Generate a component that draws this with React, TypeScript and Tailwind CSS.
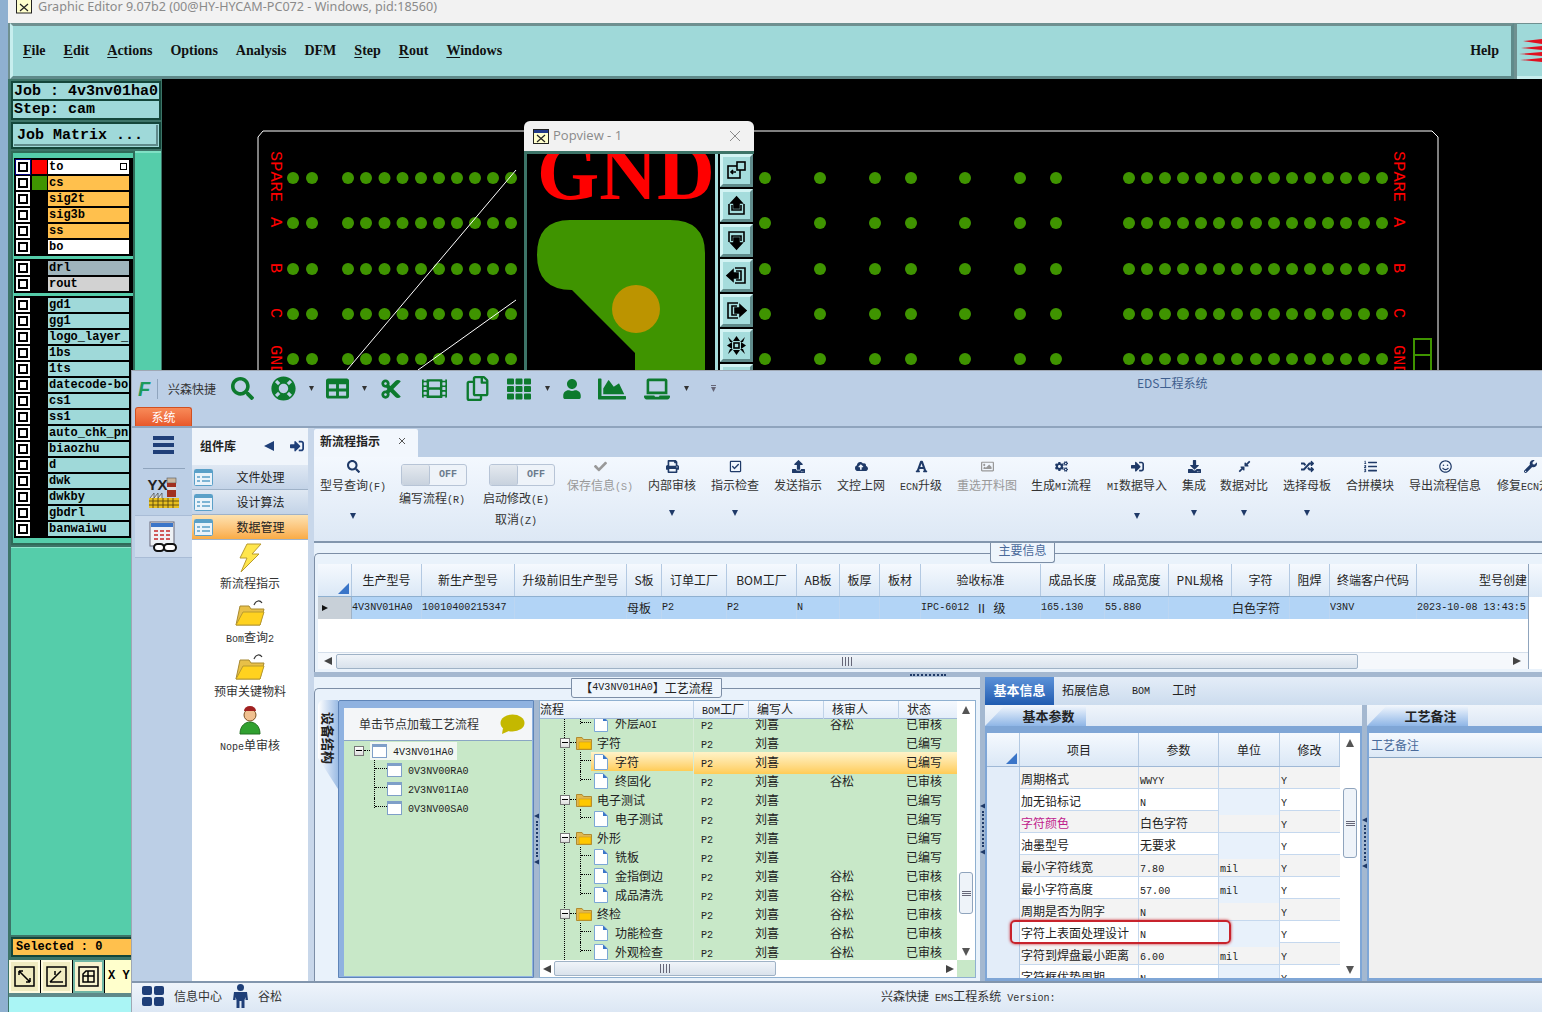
import React from "react";
import {
  FaSearch, FaLifeRing, FaTable, FaCut, FaFilm, FaRegCopy, FaTh, FaUser, FaChartArea, FaLaptop,
  FaCheck, FaPrint, FaRegCheckSquare, FaUpload, FaCloudUploadAlt, FaFont, FaRegImage, FaCogs,
  FaSignInAlt, FaDownload, FaCompressAlt, FaRandom, FaListOl, FaRegSmile, FaWrench,
} from "react-icons/fa";

function T({ s }: { s: string }) {
  return (
    <>
      {s.split(/([\x00-\x7F]+)/).filter(Boolean).map((p, i) =>
        /^[\x00-\x7F]+$/.test(p) ? (
          <span key={i} className="font-['Liberation_Mono',monospace] text-[0.84em]">{p}</span>
        ) : (
          <span key={i}>{p}</span>
        )
      )}
    </>
  );
}

function Tri({ dir = "down", c = "#333", s = 4 }: { dir?: "down" | "up" | "left" | "right"; c?: string; s?: number }) {
  const pts = { down: "0,0 8,0 4,8", up: "0,8 8,8 4,0", left: "8,0 8,8 0,4", right: "0,0 0,8 8,4" }[dir];
  return (
    <svg width={s * 2} height={s * 2} viewBox="0 0 8 8" className="shrink-0">
      <polygon points={pts} fill={c} />
    </svg>
  );
}

function Grip() {
  return (
    <span className="flex gap-[2px]">
      <span className="h-[9px] w-[1px] bg-[#667]" />
      <span className="h-[9px] w-[1px] bg-[#667]" />
      <span className="h-[9px] w-[1px] bg-[#667]" />
      <span className="h-[9px] w-[1px] bg-[#667]" />
    </span>
  );
}

function GripH() {
  return (
    <span className="flex flex-col gap-[1px]">
      <span className="h-[1px] w-[9px] bg-[#667]" />
      <span className="h-[1px] w-[9px] bg-[#667]" />
      <span className="h-[1px] w-[9px] bg-[#667]" />
    </span>
  );
}

const layerGroups: { n: string; bg: string; swatch?: string; active?: boolean; sq?: boolean }[][] = [
  [
    { n: "to", bg: "bg-white", swatch: "bg-[#ff0000]", active: true, sq: true },
    { n: "cs", bg: "bg-[#ffc04d]", swatch: "bg-[#3f9400]" },
    { n: "sig2t", bg: "bg-[#ffc04d]" },
    { n: "sig3b", bg: "bg-[#ffc04d]" },
    { n: "ss", bg: "bg-[#ffc04d]" },
    { n: "bo", bg: "bg-white" },
  ],
  [
    { n: "drl", bg: "bg-[#9fb4bc]" },
    { n: "rout", bg: "bg-[#d2d2d2]" },
  ],
  ["gd1", "gg1", "logo_layer_l", "1bs", "1ts", "datecode-bo", "cs1", "ss1", "auto_chk_pnl", "biaozhu", "d", "dwk", "dwkby", "gbdrl", "banwaiwu"].map((n) => ({
    n,
    bg: "bg-[#9fd9d9]",
  })),
];

function LayerRow({ l }: { l: (typeof layerGroups)[number][number] }) {
  return (
    <div className="flex h-[16px] items-center bg-black pl-[1px]">
      <div className={`flex h-[16px] w-[16px] items-center justify-center ${l.active ? "bg-[#000080]" : ""}`}>
        <div className="h-[14px] w-[14px] bg-white p-[2px]">
          <div className="h-full w-full bg-black p-[2px]">
            <div className="h-full w-full bg-white" />
          </div>
        </div>
      </div>
      <div className={`ml-[1px] h-[14px] w-[15px] ${l.swatch ?? ""}`} />
      <div className={`relative ml-[1px] h-[14px] w-[81px] overflow-hidden whitespace-nowrap pl-[1px] font-['Liberation_Mono',monospace] text-[12px] font-bold leading-[14px] text-black ${l.bg}`}>
        {l.n}
        {l.sq && <span className="absolute right-[2px] top-[3px] h-[7px] w-[7px] border border-black" />}
      </div>
    </div>
  );
}

function LeftPanel() {
  return (
    <div className="flex w-[154px] shrink-0 flex-col bg-[#3d7468] pl-[3px] pr-[1px] pt-[2px]">
      <div className="h-[20px] border-2 border-[#14463a] bg-[#9fd9d9] pl-[1px] pt-[1px] font-['Liberation_Mono',monospace] text-[15px] font-bold leading-[15px] whitespace-pre">Job : 4v3nv01ha0</div>
      <div className="h-[19px] border-2 border-t-0 border-[#14463a] bg-[#9fd9d9] pl-[1px] pt-[1px] font-['Liberation_Mono',monospace] text-[15px] font-bold leading-[15px] whitespace-pre">Step: cam</div>
      <div className="mt-[2px] h-[27px] border-2 border-[#14463a] bg-[#9fd9d9] p-[1px]">
        <div className="h-full border-b-2 border-r-2 border-b-[#5f8a8a] border-r-[#5f8a8a] pl-[3px] pt-[2px] font-['Liberation_Mono',monospace] text-[15px] font-bold leading-[17px] whitespace-pre">Job Matrix ...</div>
      </div>
      <div className="mt-[2px] flex h-[394px] shrink-0">
        <div className="flex w-[124px] flex-col gap-[3px] border-2 border-[#2f6a58] bg-[#55cdaa] pb-[2px] pl-[1px] pt-[5px]">
          {layerGroups.map((g, i) => (
            <div key={i} className="bg-black py-[1px]">
              {g.map((l) => <LayerRow key={l.n} l={l} />)}
            </div>
          ))}
        </div>
        <div className="flex-1 border-t-2 border-t-[#7fe0c4] bg-[#55cdaa]" />
      </div>
      <div className="mt-[2px] flex-1 border-t border-t-[#8fe6cc] bg-[#55cdaa]" />
      <div className="mt-[2px] h-[20px] border-2 border-[#14463a] bg-[#ffc04d] pl-[3px] font-['Liberation_Mono',monospace] text-[12px] font-bold leading-[16px] whitespace-pre">Selected : 0</div>
      <div className="mt-[3px] -ml-[2px] flex h-[33px] gap-[1px] bg-black">
        {[0, 1, 2].map((i) => (
          <div key={i} className={`flex h-[33px] w-[31px] items-center justify-center border-2 ${i === 2 ? "border-[#6fb5a5] bg-[#f8f3d0]" : "border-[#fffbe0] bg-[#f0ebc0]"}`}>
            <svg width="21" height="21" viewBox="0 0 21 21" fill="none" stroke="black">
              <rect x="1" y="1" width="19" height="19" strokeWidth="1.5" />
              {i === 0 && <path d="M5 5l11 11M5 5v4M5 5h4M16 16v-4M16 16h-4" strokeWidth="1.5" />}
              {i === 1 && <path d="M4 16l11-11M4 16h13M9 5v4" strokeWidth="1.5" />}
              {i === 2 && <path d="M5 16V8l3-3h8v11zM5 10h11M10 5v11" strokeWidth="1.5" />}
            </svg>
          </div>
        ))}
        <div className="flex-1 bg-[#ffffcc] pl-[3px] font-['Liberation_Mono',monospace] text-[12px] font-bold leading-[33px] whitespace-pre">X Y</div>
      </div>
      <div className="-ml-[2px] h-[4px] bg-[#5f8a8a]" />
      <div className="-ml-[2px] h-[15px] bg-[#aaf5f5]" />
    </div>
  );
}

const leftDots = [293, 312, 348, 366, 384.5, 402.5, 421, 439, 457, 475, 493, 511];
const rightDots = [765, 820, 875, 911, 965, 1020, 1056, 1129, 1147, 1165, 1183, 1201, 1219, 1237, 1256, 1274, 1292, 1310, 1328, 1346, 1364, 1382];
const rows = [178, 223, 269, 314, 359];

function RedLabels({ x }: { x: number }) {
  const items: [string, number][] = [["SPARE", 151], ["A", 217], ["B", 263], ["C", 308], ["GND", 345]];
  return (
    <>
      {items.map(([t, y]) => (
        <text key={t} transform={`translate(${x},${y}) rotate(90)`} fontSize="17" fontFamily="'Liberation Mono',monospace" fontWeight="400" fill="#ff0000">
          {t}
        </text>
      ))}
    </>
  );
}

function Canvas() {
  return (
    <div className="relative flex-1 bg-black">
      <svg className="absolute inset-0" width="1380" height="933" viewBox="162 79 1380 933">
        <path d="M258 400V137L263 131H1432L1438 137V400" fill="none" stroke="white" strokeWidth="1" />
        {rows.map((y) => [...leftDots, ...rightDots].map((x) => <circle key={`${x}-${y}`} cx={x} cy={y} r="6" fill="#3f9400" />))}
        <RedLabels x={271} />
        <RedLabels x={1394} />
        <path d="M516 170L347 370M516 300L418 370" stroke="white" strokeWidth="1" />
        <path d="M1414 339H1431V372H1414ZM1414 355H1431" fill="none" stroke="#3f9400" strokeWidth="2" />
      </svg>
    </div>
  );
}

function PopBtn({ children }: { children: React.ReactNode }) {
  return (
    <div className="flex h-[33px] w-[33px] shrink-0 items-center justify-center border-[3px] border-b-[#5f8a8a] border-l-[#d2f3f3] border-r-[#5f8a8a] border-t-[#d2f3f3] bg-[#a5dcdc]">
      <svg width="21" height="21" viewBox="0 0 21 21" fill="none" stroke="black" strokeWidth="1.6">{children}</svg>
    </div>
  );
}

function Popview() {
  return (
    <div className="absolute left-[524px] top-[121px] flex h-[249px] w-[230px] flex-col overflow-hidden rounded-t-[6px] bg-black">
      <div className="flex h-[30px] shrink-0 items-center bg-[#f2f2f2] pl-[9px] pr-[13px]">
        <svg width="16" height="15" viewBox="0 0 16 15">
          <rect x=".5" y=".5" width="15" height="14" fill="#ffffcc" stroke="#222" />
          <rect x="1" y="1" width="14" height="3" fill="#223a8a" />
          <path d="M4 6l8 7M12 6l-8 7" stroke="#222" strokeWidth="1.2" />
        </svg>
        <span className="ml-[4px] font-['Open_Sans',sans-serif] text-[13px] text-[#8a8a8a]">Popview - 1</span>
        <svg className="ml-auto" width="12" height="12" viewBox="0 0 12 12" stroke="#8a8a8a" strokeWidth="1"><path d="M1 1l10 10M11 1L1 11" /></svg>
      </div>
      <div className="flex min-h-0 flex-1 border-l-[3px] border-t-[3px] border-l-[#3d7468] border-t-[#3d7468]">
        <svg width="188" height="216" viewBox="527 154 188 216" className="shrink-0">
          <text x="537" y="199" fontSize="80" fontWeight="700" fontFamily="'Liberation Serif',serif" fill="#ff0000">GND</text>
          <path d="M570 220H670Q705 220 705 253V372H635V353L572 290Q537 290 537 255Q537 220 570 220Z" fill="#3f9400" />
          <circle cx="636" cy="309" r="24" fill="#bc9400" />
        </svg>
        <div className="flex flex-col gap-[2px] border-l-[3px] border-l-[#a5dcdc] bg-black pl-[2px]">
          <PopBtn><rect x="2" y="6" width="12" height="12" /><rect x="11" y="2" width="8" height="8" fill="#a5dcdc" /><path d="M10 12H5M7 10l-2 2 2 2" /></PopBtn>
          <PopBtn><path d="M3 9v10h15V9" /><path d="M6 10V15H15V10" /><path d="M10.5 2L5 8h3v5h5V8h3z" fill="black" /></PopBtn>
          <PopBtn><path d="M3 12V2h15v10" /><path d="M6 11V6H15V11" /><path d="M10.5 19L5 13h3V8h5v5h3z" fill="black" /></PopBtn>
          <PopBtn><path d="M9 3h10v15H9" /><path d="M10 6h5v9h-5" /><path d="M1 10.5L7 5v3h5v5H7v3z" fill="black" /></PopBtn>
          <PopBtn><path d="M12 3H2v15h10" /><path d="M11 6H6v9h5" /><path d="M20 10.5L14 5v3H9v5h5v3z" fill="black" /></PopBtn>
          <PopBtn><rect x="8" y="8" width="5" height="5" /><path d="M2 2l5 5H4zM19 2l-5 5h3zM2 19l5-5H4zM19 19l-5-5h3zM1 10.5L6 7v7zM20 10.5L15 7v7zM10.5 1L7 6h7zM10.5 20L7 15h7z" fill="black" stroke="none" /></PopBtn>
          <PopBtn><rect x="3" y="3" width="15" height="15" /></PopBtn>
        </div>
      </div>
    </div>
  );
}

const toolIcons: { w: string; i?: React.ReactNode }[] = [
  { w: "w-[36px]", i: <FaSearch size={23} /> },
  { w: "w-[46px]", i: <FaLifeRing size={25} /> },
  { w: "w-[10px]" },
  { w: "w-[42px]", i: <FaTable size={23} /> },
  { w: "w-[12px]" },
  { w: "w-[42px]", i: <FaCut size={22} /> },
  { w: "w-[44px]", i: <FaFilm size={25} /> },
  { w: "w-[42px]", i: <FaRegCopy size={25} /> },
  { w: "w-[42px]", i: <FaTh size={24} /> },
  { w: "w-[14px]" },
  { w: "w-[36px]", i: <FaUser size={20} /> },
  { w: "w-[44px]", i: <FaChartArea size={28} /> },
  { w: "w-[46px]", i: <FaLaptop size={26} /> },
  { w: "w-[12px]" },
];

type Rb = { l: string; w: string; I?: React.ComponentType<{ size?: number; className?: string }>; c?: boolean; off?: boolean; t?: string[]; tm?: string };
const ribbon: Rb[] = [
  { l: "型号查询(F)", w: "w-[78px]", I: FaSearch, c: true },
  { l: "编写流程(R)", w: "w-[80px]", t: ["编写流程(R)"], tm: "ml-[4px]" },
  { l: "启动修改(E)", w: "w-[88px]", t: ["启动修改(E)", "取消(Z)"], tm: "ml-[12px]" },
  { l: "保存信息(S)", w: "w-[80px]", I: FaCheck, off: true },
  { l: "内部审核", w: "w-[64px]", I: FaPrint, c: true },
  { l: "指示检查", w: "w-[62px]", I: FaRegCheckSquare, c: true },
  { l: "发送指示", w: "w-[64px]", I: FaUpload },
  { l: "文控上网", w: "w-[62px]", I: FaCloudUploadAlt },
  { l: "ECN升级", w: "w-[58px]", I: FaFont },
  { l: "重选开料图", w: "w-[74px]", I: FaRegImage, off: true },
  { l: "生成MI流程", w: "w-[74px]", I: FaCogs },
  { l: "MI数据导入", w: "w-[78px]", I: FaSignInAlt, c: true },
  { l: "集成", w: "w-[36px]", I: FaDownload, c: true },
  { l: "数据对比", w: "w-[64px]", I: FaCompressAlt, c: true },
  { l: "选择母板", w: "w-[62px]", I: FaRandom, c: true },
  { l: "合拼模块", w: "w-[64px]", I: FaListOl },
  { l: "导出流程信息", w: "w-[86px]", I: FaRegSmile },
  { l: "修复ECN升级", w: "w-[84px]", I: FaWrench },
];

function RibbonBtn({ b }: { b: Rb }) {
  if (b.t) {
    return (
      <div className={`flex shrink-0 flex-col items-center ${b.w}`}>
        <div className={`mt-[7px] flex h-[22px] w-[66px] rounded-[3px] border border-[#b7c4d6] bg-[#eef3f9] ${b.tm}`}>
          <div className="w-[28px] rounded-[2px] border-r border-[#b7c4d6] bg-gradient-to-b from-[#e4e9ef] to-[#c8d2de]" />
          <div className="flex-1 text-center font-['Liberation_Mono',monospace] text-[10px] font-bold leading-[20px] text-[#6b7b8d]">OFF</div>
        </div>
        <div className="mt-[3px] text-center text-[12px] leading-[18px] text-[#333]">
          {b.t.map((x) => <div key={x}><T s={x} /></div>)}
        </div>
      </div>
    );
  }
  const I = b.I!;
  return (
    <div className={`flex shrink-0 flex-col items-center ${b.w} ${b.off ? "text-[#999]" : "text-[#333]"}`}>
      <div className={`mt-[2px] flex h-[14px] items-center ${b.off ? "" : "text-[#1f3a68]"}`}><I size={13} /></div>
      <div className="mt-[4px] whitespace-nowrap text-[12px] leading-[16px]"><T s={b.l} /></div>
      {b.c && <div className="mt-[18px] flex h-[4px] items-center"><Tri c="#1f3a68" s={3} /></div>}
    </div>
  );
}

const mainCols = "grid-cols-[34px_70px_93px_112px_35px_65px_70px_43px_40px_41px_120px_64px_64px_63px_58px_40px_87px_110px]";
const mainHead: [string, boolean?][] = [["生产型号"], ["新生产型号"], ["升级前旧生产型号"], ["S板", true], ["订单工厂"], ["BOM工厂", true], ["AB板", true], ["板厚"], ["板材"], ["验收标准"], ["成品长度"], ["成品宽度"], ["PNL规格", true], ["字符"], ["阻焊"], ["终端客户代码"]];
const mainRow = ["4V3NV01HA0", "10010400215347", "", "母板", "P2", "P2", "N", "", "", "IPC-6012 Ⅱ 级", "165.130", "55.880", "", "白色字符", "", "V3NV", "2023-10-08 13:43:5"];

function MainTable() {
  return (
    <div className="flex min-h-0 flex-1 bg-white">
      <div className="flex w-[1210px] shrink-0 flex-col overflow-hidden">
        <div className={`grid h-[33px] shrink-0 ${mainCols} border-b border-[#8fb0d0] bg-gradient-to-b from-[#f5f9fe] to-[#dbe8f6]`}>
          <div className="relative border-r border-[#b3c9e2]"><span className="absolute bottom-[2px] right-[2px] border-b-[11px] border-l-[11px] border-b-[#3a75c8] border-l-transparent" /></div>
          {mainHead.map(([h, sans]) => (
            <div key={h} className="flex items-center justify-center overflow-hidden whitespace-nowrap border-r border-[#b3c9e2] text-[12px] text-[#222]">{sans ? h : <T s={h} />}</div>
          ))}
          <div className="flex items-center justify-end overflow-hidden text-[12px] text-[#222]">型号创建</div>
        </div>
        <div className={`grid h-[22px] shrink-0 ${mainCols} bg-[#b2d4f6]`}>
          <div className="flex items-center border-r border-[#9fb2c6] bg-[#c8d0d8] pl-[4px]"><Tri dir="right" c="#111" s={3} /></div>
          {mainRow.map((c, i) => (
            <div key={i} className="flex items-center overflow-hidden whitespace-pre border-r border-[#bcd6f2] text-[12px] leading-[22px] text-[#222]"><T s={c} /></div>
          ))}
        </div>
        <div className="flex-1 bg-white" />
        <div className="flex h-[17px] shrink-0 items-center border-t border-[#d5dfeb] bg-[#f5f8fc] pl-[6px]">
          <Tri dir="left" c="#444" s={4} />
          <div className="ml-[4px] flex h-[15px] w-[1022px] items-center justify-center rounded-[2px] border border-[#9fb2c6] bg-gradient-to-b from-[#f0f4f9] to-[#d9e2ec]">
            <Grip />
          </div>
          <span className="ml-[155px]"><Tri dir="right" c="#444" s={4} /></span>
        </div>
      </div>
      <div className="flex-1 border-l border-[#8fa4bd] bg-white">
        <div className="h-[33px] bg-gradient-to-b from-[#f5f9fe] to-[#dbe8f6]" />
      </div>
    </div>
  );
}

type Fl = { n: string; k: "leaf" | "folder"; last?: boolean; sel?: boolean; rv?: string; st: string };
const flow: Fl[] = [
  { n: "外层AOI", k: "leaf", last: true, rv: "谷松", st: "已审核" },
  { n: "字符", k: "folder", st: "已编写" },
  { n: "字符", k: "leaf", sel: true, st: "已编写" },
  { n: "终固化", k: "leaf", last: true, rv: "谷松", st: "已审核" },
  { n: "电子测试", k: "folder", st: "已编写" },
  { n: "电子测试", k: "leaf", last: true, st: "已编写" },
  { n: "外形", k: "folder", st: "已编写" },
  { n: "铣板", k: "leaf", st: "已编写" },
  { n: "金指倒边", k: "leaf", rv: "谷松", st: "已审核" },
  { n: "成品清洗", k: "leaf", last: true, rv: "谷松", st: "已审核" },
  { n: "终检", k: "folder", rv: "谷松", st: "已审核" },
  { n: "功能检查", k: "leaf", rv: "谷松", st: "已审核" },
  { n: "外观检查", k: "leaf", last: true, rv: "谷松", st: "已审核" },
];

function Doc() {
  return (
    <svg width="14" height="16" viewBox="0 0 14 16" className="shrink-0">
      <path d="M.5.5H9L13.5 5V15.5H.5Z" fill="#fff" stroke="#7ba7d6" />
      <path d="M9 .5V5H13.5Z" fill="#3a75c8" />
    </svg>
  );
}
function Folder() {
  return (
    <svg width="16" height="14" viewBox="0 0 16 14" className="shrink-0">
      <path d="M.5 13.5V1.5H6L7.5 3.5H15.5V13.5Z" fill="#e0b850" stroke="#b08a30" />
      <rect x="3" y="6" width="12" height="7" fill="#ffc800" stroke="#c89a20" strokeWidth=".6" />
    </svg>
  );
}
function Exp() {
  return (
    <span className="flex h-[10px] w-[10px] shrink-0 items-center justify-center border border-[#777] bg-gradient-to-b from-white to-[#ddd]">
      <span className="h-[1px] w-[6px] bg-black" />
    </span>
  );
}
function Win({ w = 15 }: { w?: number }) {
  return (
    <svg width={w} height="14" viewBox="0 0 15 14" className="shrink-0">
      <rect x=".5" y=".5" width="14" height="13" fill="#fff" stroke="#7f9fc8" />
      <rect x="1" y="1" width="13" height="2" fill="#7f9fc8" />
    </svg>
  );
}

function VSplit() {
  return (
    <div className="flex w-[5px] shrink-0 flex-col items-center justify-center gap-[2px] bg-[#a4b8d0]">
      <Tri dir="left" c="#1f3a68" s={3} />
      <div className="h-[36px] w-[2px] border-l-2 border-dotted border-[#1f3a68]" />
      <Tri dir="left" c="#1f3a68" s={3} />
    </div>
  );
}

function FlowGrid() {
  const cols = "grid-cols-[154px_55px_75px_75px_59px]";
  return (
    <div className="relative flex w-[437px] shrink-0 flex-col border border-[#8fb0d0] bg-white">
      <div className="flex min-h-0 flex-1">
        <div className="flex min-w-0 flex-1 flex-col">
          <div className={`grid h-[18px] shrink-0 ${cols} border-b border-[#9fb8d6] bg-gradient-to-b from-[#f5f9fe] to-[#e3edf9] text-[12px] leading-[15px] text-[#222]`}>
            <div className="border-r border-[#c0d3e8]">流程</div>
            <div className="border-r border-[#c0d3e8] pl-[8px]"><T s="BOM工厂" /></div>
            <div className="border-r border-[#c0d3e8] pl-[8px]">编写人</div>
            <div className="border-r border-[#c0d3e8] pl-[8px]">核审人</div>
            <div className="pl-[8px]">状态</div>
          </div>
          <div className="relative min-h-0 flex-1 overflow-hidden bg-[#c8e8c8]">
            <div className="absolute bottom-0 left-[24px] top-0 border-l border-dotted border-black" />
            <div className="-mt-[5px]">
              {flow.map((r, i) => (
                <div key={i} className={`grid h-[19px] ${cols} text-[12px] leading-[19px] text-[#222]`}>
                  <div className="relative flex h-[19px] items-center border-r border-[#d7ecd7]">
                    {r.k === "folder" ? (
                      <div className="flex items-center pl-[20px]">
                        <Exp />
                        <span className="w-[6px] border-t border-dotted border-black" />
                        <Folder />
                        <span className="ml-[5px] whitespace-nowrap"><T s={r.n} /></span>
                      </div>
                    ) : (
                      <div className="flex h-[19px] items-center pl-[40px]">
                        <span className={`w-[11px] shrink-0 self-start border-l border-dotted border-black ${r.last ? "h-[10px]" : "h-[19px]"}`}>
                          <span className="block h-[9px] border-b border-dotted border-black" />
                        </span>
                        <span className={`flex h-[19px] w-[102px] items-center pl-[3px] ${r.sel ? "bg-gradient-to-b from-[#fff3c8] to-[#ffcc55]" : ""}`}>
                          <Doc />
                          <span className="ml-[7px] whitespace-nowrap"><T s={r.n} /></span>
                        </span>
                      </div>
                    )}
                  </div>
                  {[["P2", "pl-[7px]"], ["刘喜", "pl-[6px]"], [r.rv ?? "", "pl-[6px]"], [r.st, "pl-[7px]"]].map(([c, p], j) => (
                    <div key={j} className={`${p} ${r.sel ? "bg-gradient-to-b from-[#fff3c8] to-[#ffcc55]" : ""}`}><T s={c} /></div>
                  ))}
                </div>
              ))}
            </div>
          </div>
        </div>
        <div className="flex w-[18px] shrink-0 flex-col items-center bg-white">
          <div className="mt-[5px]"><Tri dir="up" c="#555" s={4} /></div>
          <div className="mt-[158px] flex h-[42px] w-[14px] items-center justify-center rounded-[3px] border border-[#8fa4bd] bg-[#eef3f9]"><GripH /></div>
          <div className="mt-[34px]"><Tri c="#555" s={4} /></div>
        </div>
      </div>
      <div className="flex h-[17px] shrink-0 items-center bg-white pl-[3px]">
        <Tri dir="left" c="#444" s={4} />
        <div className="ml-[3px] flex h-[15px] w-[222px] items-center justify-center rounded-[2px] border border-[#9fb2c6] bg-gradient-to-b from-[#f0f4f9] to-[#d9e2ec]"><Grip /></div>
        <span className="ml-[170px]"><Tri dir="right" c="#444" s={4} /></span>
        <div className="ml-auto h-full w-[18px] bg-[#c8e8c8]" />
      </div>
    </div>
  );
}

function LowerLeft() {
  return (
    <div className="relative flex w-[666px] shrink-0 flex-col bg-[#e9f2fb] pt-[11px]">
      <div className="absolute left-[257px] top-[1px] z-10 flex h-[20px] w-[151px] items-center justify-center rounded-b-[3px] border border-[#7c8ea6] bg-[#eef5fc] text-[12px] text-[#222]"><T s="【4V3NV01HA0】工艺流程" /></div>
      <div className="flex min-h-0 flex-1 flex-col rounded-tl-[5px] border-l border-t border-[#7c8ea6] pb-[3px] pl-[3px] pt-[11px]">
        <div className="flex min-h-0 flex-1">
          <div className="flex h-[89px] w-[20px] shrink-0 justify-center rounded-tl-[6px] bg-gradient-to-r from-white to-[#9cbce4] pt-[12px] [clip-path:polygon(0_0,100%_0,100%_100%,0_65%)]">
            <span className="text-[13px] font-bold leading-[20px] text-[#222] [text-orientation:sideways] [writing-mode:vertical-rl]">设备结构</span>
          </div>
          <div className="flex w-[196px] shrink-0 flex-col rounded-tl-[2px] border border-[#5f85b8] bg-[#8fb2e0] pb-[1px] pl-[5px] pr-[1px] pt-[7px]">
            <div className="flex h-[33px] shrink-0 items-center border-b border-[#8aa6c4] bg-[#f4f6f8] pl-[15px] pr-[7px] text-[12px] text-[#333]">
              单击节点加载工艺流程
              <svg className="ml-auto" width="25" height="21" viewBox="0 0 25 21"><ellipse cx="12.5" cy="9" rx="12" ry="8.5" fill="#c4b800" /><path d="M3 14L2 20L11 16Z" fill="#c4b800" /></svg>
            </div>
            <div className="relative flex-1 bg-[#c8e8c8] pl-[10px] text-[#222]">
              <div className="flex h-[19px] items-center">
                <Exp />
                <span className="w-[6px] border-t border-dotted border-black" />
                <span className="flex h-[18px] w-[87px] items-center bg-[#f2f7f2] pl-[2px] text-[12px]"><Win /><span className="ml-[6px]"><T s="4V3NV01HA0" /></span></span>
              </div>
              <div className="ml-[20px] h-[57px]">
                {["0V3NV00RA0", "2V3NV01IA0", "0V3NV00SA0"].map((n, i) => (
                  <div key={n} className="flex h-[19px] items-center text-[12px]">
                    <span className={`w-[13px] shrink-0 self-start border-l border-dotted border-black ${i === 2 ? "h-[10px]" : "h-[19px]"}`}>
                      <span className="block h-[9px] border-b border-dotted border-black" />
                    </span>
                    <Win />
                    <span className="ml-[6px]"><T s={n} /></span>
                  </div>
                ))}
              </div>
            </div>
          </div>
          <VSplit />
          <FlowGrid />
        </div>
      </div>
    </div>
  );
}

const props: [string, string, string, boolean?][] = [
  ["周期格式", "WWYY", ""],
  ["加无铅标记", "N", ""],
  ["字符颜色", "白色字符", "", true],
  ["油墨型号", "无要求", ""],
  ["最小字符线宽", "7.80", "mil"],
  ["最小字符高度", "57.00", "mil"],
  ["周期是否为阴字", "N", ""],
  ["字符上表面处理设计", "N", ""],
  ["字符到焊盘最小距离", "6.00", "mil"],
  ["字符框优势周期", "N", ""],
];

function Slant({ t }: { t: string }) {
  return (
    <div className="flex h-[22px] shrink-0 items-end border-b border-[#7fa6d6] bg-gradient-to-b from-[#f0f5fb] to-[#dde8f5]">
      <div className="flex h-[21px] w-[101px] items-center justify-center bg-gradient-to-b from-[#f4f8fd] to-[#8fb6e6] pl-[26px] text-[13px] font-bold leading-[21px] text-[#222] [clip-path:polygon(20%_0,100%_0,100%_100%,0_100%)]">{t}</div>
    </div>
  );
}

function LowerRight() {
  const cols = "grid-cols-[33px_119px_80px_61px_60px]";
  return (
    <div className="flex min-w-0 flex-1 flex-col bg-[#dfe9f5]">
      <div className="flex h-[28px] shrink-0 items-center bg-gradient-to-b from-[#e4edf8] to-[#ccdcee] pb-[2px] text-[12px] text-[#222]">
        <div className="-mb-[2px] flex h-[28px] w-[69px] items-center justify-center bg-gradient-to-b from-[#5c92d8] to-[#1f5bb0] pb-[2px] text-[13px] font-bold text-white">基本信息</div>
        <span className="ml-[8px]">拓展信息</span>
        <span className="ml-[22px]"><T s="BOM" /></span>
        <span className="ml-[22px]">工时</span>
      </div>
      <div className="flex min-h-0 flex-1 bg-[#e5edf7]">
        <div className="flex w-[377px] shrink-0 flex-col">
          <Slant t="基本参数" />
          <div className="relative min-h-0 flex-1 bg-[#7fa6d6] pl-[2px] pt-[6px]">
            <div className="flex h-[245px] w-[373px] bg-white">
              <div className="w-[353px] shrink-0 overflow-hidden">
                <div className={`grid h-[34px] ${cols} border-b border-[#9fb8d6] bg-gradient-to-b from-[#f5f9fe] to-[#dbe8f6] text-[12px] text-[#222]`}>
                  <div className="relative border-r border-[#b3c9e2]"><span className="absolute bottom-[2px] right-[2px] border-b-[11px] border-l-[11px] border-b-[#3a75c8] border-l-transparent" /></div>
                  {["项目", "参数", "单位", "修改"].map((h) => <div key={h} className="flex items-center justify-center border-r border-[#b3c9e2]">{h}</div>)}
                </div>
                {props.map(([a, b, c, pink], i) => (
                  <div key={a} className={`grid h-[22px] ${cols} border-b border-[#c5d8ee] text-[12px] leading-[23px] text-[#222] ${i % 2 ? "bg-white" : "bg-[#f3f3f3]"}`}>
                    <div className="border-r border-[#b3c9e2] bg-[#e3edf9]" />
                    <div className={`overflow-hidden whitespace-nowrap border-r border-[#c5d8ee] pl-[1px] ${pink ? "text-[#c0208c]" : ""}`}>{a}</div>
                    <div className="border-r border-[#c5d8ee] pl-[1px]"><T s={b} /></div>
                    <div className={`border-r border-[#c5d8ee] pl-[1px] ${i % 2 ? "bg-[#e8f1fb]" : ""}`}><T s={c} /></div>
                    <div className="pl-[1px]"><T s="Y" /></div>
                  </div>
                ))}
              </div>
              <div className="flex w-[20px] shrink-0 flex-col items-center bg-white">
                <div className="mt-[6px]"><Tri dir="up" c="#555" s={4} /></div>
                <div className="mt-[41px] flex h-[70px] w-[14px] items-center justify-center rounded-[3px] border border-[#8fa4bd] bg-[#eef3f9]"><GripH /></div>
                <div className="mt-[108px]"><Tri c="#555" s={4} /></div>
              </div>
            </div>
            <div className="absolute left-[25px] top-[193px] h-[24px] w-[221px] rounded-[5px] border-2 border-[#c8232c] shadow-[0_0_3px_#c8232c]" />
          </div>
        </div>
        <VSplit />
        <div className="flex min-w-0 flex-1 flex-col">
          <Slant t="工艺备注" />
          <div className="flex min-h-0 flex-1 flex-col bg-[#7fa6d6] pb-[3px] pl-[2px] pt-[6px]">
            <div className="flex h-[25px] shrink-0 items-center border-b border-[#8aa6c4] bg-gradient-to-b from-[#f5f9fe] to-[#dbe8f6] pl-[2px] text-[12px] text-[#4a6a9a]">工艺备注</div>
            <div className="flex-1 bg-[#f0f0f0]" />
          </div>
        </div>
      </div>
    </div>
  );
}

function Eds() {
  const folderIcon = (
    <svg width="30" height="28" viewBox="0 0 30 28">
      <path d="M19 6C21 1 25 1 27 4" fill="none" stroke="#333" strokeWidth="1.2" />
      <path d="M1 26L5 7H14L16 10H29L25 26Z" fill="#e8c048" stroke="#a88a30" />
      <path d="M1 26L8 13H29L25 26Z" fill="#ffd21f" stroke="#b89a30" />
    </svg>
  );
  const avatar = (
    <svg width="24" height="30" viewBox="0 0 24 30">
      <circle cx="12" cy="10" r="6" fill="#f0c090" stroke="#7a5020" />
      <path d="M6 6a6 5 0 0 1 12 0z" fill="#a02020" />
      <path d="M2 29c0-9 6-12 10-12s10 3 10 12z" fill="#30a030" stroke="#207020" />
    </svg>
  );
  const bolt = <svg width="26" height="30" viewBox="0 0 26 30"><path d="M10 1H24L15 11H22L4 29L10 15H3Z" fill="#ffe64d" stroke="#b89a30" /></svg>;
  const menu: [string, React.ReactNode][] = [["新流程指示", bolt], ["Bom查询2", folderIcon], ["预审关键物料", folderIcon], ["Nope单审核", avatar]];
  return (
    <div className="absolute bottom-0 left-[131px] right-0 top-[370px] z-20 flex flex-col border-l border-t border-[#9fa8b4] bg-[#bccfe6] font-['Noto_Sans_CJK_SC',sans-serif]">
      <div className="relative flex h-[37px] shrink-0 items-center pb-[2px] pl-[5px]">
        <span className="w-[19px] pl-[1px] text-left font-['Liberation_Sans',sans-serif] text-[20px] font-bold italic leading-none text-[#1d9a5a]">F</span>
        <span className="ml-[1px] h-[20px] border-l border-[#8fa4bd]" />
        <span className="ml-[10px] w-[56px] whitespace-nowrap text-[12px] text-[#333]">兴森快捷</span>
        {toolIcons.map((t, i) => (
          <span key={i} className={`flex shrink-0 justify-center text-[#0d7a2e] ${t.w}`}>
            {t.i ?? <Tri c="#333" s={2.5} />}
          </span>
        ))}
        <span className="flex w-[42px] shrink-0 flex-col items-center">
          <span className="h-[1px] w-[5px] bg-[#667]" />
          <span className="mt-[1px]"><Tri c="#667" s={2.5} /></span>
        </span>
        <span className="absolute left-[1005px] top-[3px] whitespace-nowrap text-[12px] leading-[18px] text-[#40608f]">EDS工程系统</span>
      </div>
      <div className="flex h-[20px] shrink-0 items-end border-b-2 border-[#8fa4bd] pl-[3px]">
        <div className="flex h-[19px] w-[57px] items-center justify-center rounded-t-[3px] border border-b-0 border-[#d05020] bg-gradient-to-b from-[#f88a58] to-[#e8582a] text-[12px] text-white">系统</div>
      </div>
      <div className="flex min-h-0 flex-1 pl-[3px]">
        <div className="flex w-[57px] shrink-0 flex-col items-center">
          <div className="mt-[8px] flex w-[21px] flex-col gap-[3px]">
            <span className="h-[4px] bg-[#1f3f78]" /><span className="h-[4px] bg-[#1f3f78]" /><span className="h-[4px] bg-[#1f3f78]" />
          </div>
          <div className="mt-[14px] h-[1px] w-[42px] bg-[#8fa4bd]" />
          <div className="mt-[8px] flex h-[38px] w-full justify-center">
            <div className="relative h-[31px] w-[32px]">
              <span className="absolute left-0 top-0 font-['Liberation_Sans',sans-serif] text-[15px] font-bold leading-[15px] text-[#222]">YX</span>
              <svg width="32" height="31" viewBox="0 0 32 31">
                <rect x="19" y="1" width="9" height="5" fill="#c8b8a0" stroke="#555" strokeWidth=".6" />
                <rect x="19" y="6" width="9" height="14" fill="#a03020" />
                <rect x="19" y="10" width="9" height="3" fill="#ddd" />
                <path d="M2 21l4-5v5l4-5v5l4-5v5" stroke="#444" fill="#ddd" strokeWidth=".7" />
                <rect x="1" y="21" width="30" height="10" fill="#e8c020" />
                <path d="M1 24h30M1 28h30M5 21v10M10 21v10M15 21v10M20 21v10M25 21v10" stroke="#4a3a10" strokeWidth=".8" />
              </svg>
            </div>
          </div>
          <div className="flex h-[43px] w-full items-center justify-center border-y border-[#a9bcd6] bg-[#ccdaec]">
            <svg width="29" height="32" viewBox="0 0 29 32">
              <rect x="1" y="1" width="24" height="24" fill="#eef2f6" stroke="#667" />
              <rect x="2" y="2" width="22" height="4" fill="#3a75c8" />
              <path d="M5 10h4M11 10h4M17 10h4M5 14h4M11 14h4M17 14h4M5 18h4M11 18h4M17 18h4" stroke="#d05a5a" strokeWidth="2" />
              <rect x="5" y="23" width="10" height="7" rx="3.5" fill="#fff" stroke="#111" strokeWidth="2" />
              <rect x="15" y="23" width="12" height="7" rx="3.5" fill="#fff" stroke="#111" strokeWidth="2" />
            </svg>
          </div>
        </div>
        <div className="flex w-[122px] shrink-0 flex-col border-r-[6px] border-r-[#c8d7ea]">
          <div className="flex h-[37px] shrink-0 items-center bg-[#f0f5fb] pb-[2px] pl-[8px] text-[12px] font-bold text-[#222]">
            组件库
            <span className="ml-[28px]"><Tri dir="left" c="#1f3f78" s={5} /></span>
            <span className="ml-[16px] text-[#1f3f78]"><FaSignInAlt size={14} /></span>
          </div>
          {["文件处理", "设计算法", "数据管理"].map((t, i) => (
            <div key={t} className={`flex h-[25px] shrink-0 items-center border-b border-[#9fb2c8] pl-[2px] text-[12px] text-[#222] ${i === 2 ? "bg-gradient-to-b from-[#fde2b0] to-[#f9ab44]" : "bg-gradient-to-b from-[#dfe8f3] to-[#c3d3e7]"}`}>
              <svg width="19" height="17" viewBox="0 0 19 17" className="shrink-0">
                <rect x=".5" y=".5" width="18" height="16" rx="1" fill="#eaf3fa" stroke="#5aa0c8" />
                <rect x="1" y="1" width="17" height="3" fill="#5aa0c8" />
                <path d="M3 8h3M3 12h3M8 8h8M8 12h8" stroke="#5aa0c8" strokeWidth="1.5" />
              </svg>
              <span className="flex-1 text-center">{t}</span>
            </div>
          ))}
          <div className="flex flex-1 flex-col items-center bg-white text-[12px] text-[#333]">
            {menu.map(([t, ic]) => (
              <div key={t} className="flex h-[54px] shrink-0 flex-col items-center">
                <div className="flex h-[33px] items-end">{ic}</div>
                <div className="mt-[2px] whitespace-nowrap leading-[16px]"><T s={t} /></div>
              </div>
            ))}
          </div>
        </div>
        <div className="flex min-w-0 flex-1 flex-col">
          <div className="flex h-[29px] shrink-0 items-end bg-[#bccfe6]">
            <div className="flex h-[28px] w-[104px] items-center rounded-t-[2px] bg-[#f2f7fd] pb-[5px] pl-[6px] text-[12px] font-bold text-[#222]">
              新流程指示
              <svg className="ml-[18px]" width="8" height="8" viewBox="0 0 8 8" stroke="#555"><path d="M1 1l6 6M7 1L1 7" /></svg>
            </div>
          </div>
          <div className="flex h-[84px] shrink-0 overflow-hidden bg-gradient-to-b from-[#f3f8fe] to-[#dde8f5]">
            {ribbon.map((b) => <RibbonBtn key={b.l} b={b} />)}
          </div>
          <div className="h-[2px] shrink-0 bg-[#8296ad]" />
          <div className="relative flex h-[129px] shrink-0 flex-col bg-[#e9f2fb] pt-[10px]">
            <div className="absolute left-[676px] top-0 z-10 flex h-[20px] w-[65px] items-center justify-center rounded-b-[3px] border border-t-0 border-[#7c8ea6] bg-[#eef5fc] pb-[5px] text-[12px] text-[#4a6a9a]">主要信息</div>
            <div className="flex min-h-0 flex-1 flex-col rounded-tl-[5px] border-l border-t border-[#7c8ea6] pb-[3px] pl-[3px] pt-[10px]">
              <MainTable />
            </div>
          </div>
          <div className="flex h-[5px] shrink-0 items-center justify-center bg-[#a4b8d0]">
            <span className="w-[36px] border-t-2 border-dotted border-[#1f3a68]" />
          </div>
          <div className="flex min-h-0 flex-1">
            <LowerLeft />
            <VSplit />
            <LowerRight />
          </div>
        </div>
      </div>
      <div className="relative flex h-[31px] shrink-0 items-center border-t-2 border-[#8296ad] bg-gradient-to-b from-[#eef4fb] to-[#dce7f4] pb-[3px] pl-[10px] text-[12px] text-[#333]">
        <span className="grid h-[20px] w-[22px] grid-cols-2 gap-[2px]">
          <span className="rounded-[2px] bg-[#1f3f78]" /><span className="rounded-[2px] bg-[#1f3f78]" /><span className="rounded-[2px] bg-[#1f3f78]" /><span className="rounded-[2px] bg-[#1f3f78]" />
        </span>
        <span className="ml-[10px]">信息中心</span>
        <svg className="ml-[11px]" width="15" height="24" viewBox="0 0 15 24" fill="#1f3f78">
          <circle cx="7.5" cy="3.5" r="3.5" />
          <path d="M1 8h13l1 8h-2.5v-3l-1 3v8H8.5v-7h-2v7H3.5v-8l-1-3v3H0z" />
        </svg>
        <span className="ml-[10px]">谷松</span>
        <span className="absolute left-[749px] top-[4px] whitespace-pre leading-[18px]"><T s="兴森快捷 EMS工程系统 Version:" /></span>
      </div>
    </div>
  );
}

export default function App() {
  return (
    <div className="relative flex h-[1012px] w-[1542px] overflow-hidden bg-[#8fb0d0] font-['Noto_Sans_CJK_SC',sans-serif]">
      <div className="w-[8px] shrink-0" />
      <div className="flex min-w-0 flex-1 flex-col">
        <div className="flex h-[23px] shrink-0 items-start bg-[#f2f2f2] pl-[8px]">
          <svg width="16" height="14" viewBox="0 0 16 14">
            <rect x=".5" y="-1" width="15" height="14" fill="#ffffcc" stroke="#222" />
            <path d="M4 4l8 7M12 4l-8 7" stroke="#222" strokeWidth="1.2" />
          </svg>
          <span className="ml-[6px] whitespace-nowrap font-['Noto_Sans',sans-serif] text-[12.6px] leading-[14px] text-[#8a8a8a]">Graphic Editor 9.07b2 (00@HY-HYCAM-PC072 - Windows, pid:18560)</span>
        </div>
        <div className="flex h-[56px] shrink-0 bg-[#6f9090]">
          <div className="ml-[2px] flex w-[1504px] items-center justify-between border-[3px] border-[#5f8a8a] border-l-[#c7eeee] border-t-[#6f9090] bg-[#9fd9d9] pb-[2px] pl-[10px] pr-[12px] font-['Liberation_Serif',serif] text-[14px] font-bold text-[#111]">
            <div className="flex gap-[18px]">
              {["File", "Edit", "Actions", "Options", "Analysis", "DFM", "Step", "Rout", "Windows"].map((m) => {
                const u = !["Options", "Analysis", "DFM"].includes(m);
                return (
                  <span key={m}>
                    {u ? <span className="underline underline-offset-2">{m[0]}</span> : m[0]}
                    {m.slice(1)}
                  </span>
                );
              })}
            </div>
            <span>Help</span>
          </div>
          <div className="ml-[3px] flex-1 border-b-[3px] border-t-[1px] border-b-[#c7eeee] border-t-[#6f9090] bg-[#9fd9d9] pt-[14px]">
            <svg width="25" height="26" viewBox="0 0 25 26">
              <path d="M6 3L25 1V6ZM4 10L25 8V12ZM2 16L25 14V18ZM3 22L25 20V24Z" fill="#e01020" />
            </svg>
          </div>
        </div>
        <div className="flex min-h-0 flex-1">
          <LeftPanel />
          <Canvas />
        </div>
      </div>
      <Popview />
      <Eds />
    </div>
  );
}
